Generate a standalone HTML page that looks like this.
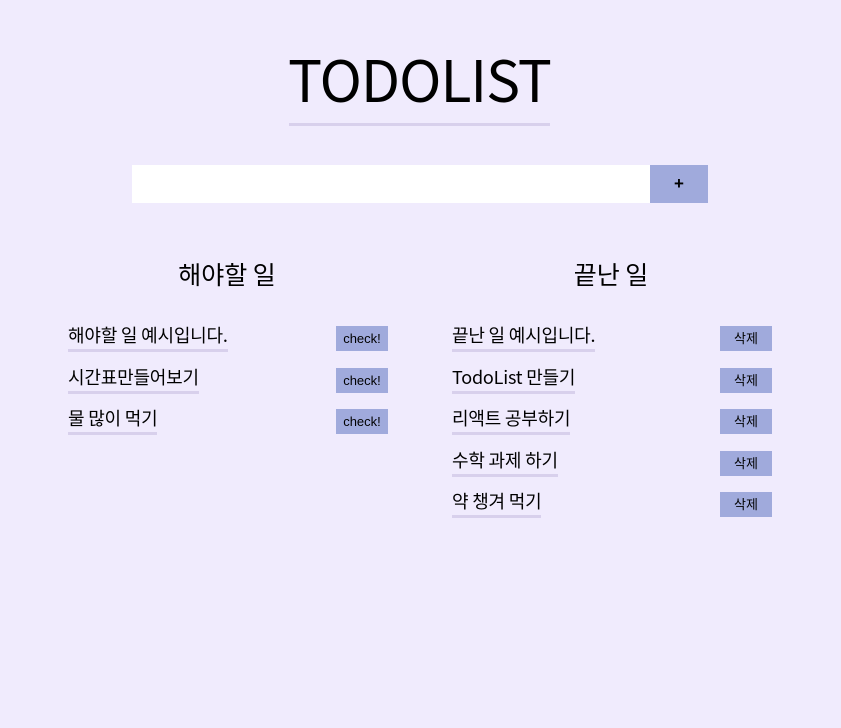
<!DOCTYPE html>
<html><head><meta charset="utf-8"><style>
html,body{margin:0;padding:0;width:841px;height:728px;background:#f0ebfd;overflow:hidden;font-family:"Liberation Sans","Noto Sans CJK KR",sans-serif;color:#000}
.a{position:absolute;white-space:nowrap}
.title{left:269px;top:43px;width:301px;font-size:57px;line-height:70px;text-align:center;font-family:"Noto Sans CJK KR","Liberation Sans",sans-serif;font-weight:400;letter-spacing:-1px}
.tl{left:289px;top:123px;width:261px;height:3px;background:#d8d0ec}
.inp{left:132px;top:165px;width:518px;height:38px;background:#fff}
.plus{left:650px;top:165px;width:58px;height:38px;background:#a0aadc;font-size:17px;line-height:38px;text-align:center;font-weight:bold}
.h{font-size:25px;line-height:30px;font-family:"Noto Sans CJK KR",sans-serif;top:259px;text-align:center;width:200px}
.it{font-size:18px;line-height:24px;font-family:"Noto Sans CJK KR",sans-serif;padding-bottom:2px;border-bottom:3px solid #d8d0ec;letter-spacing:-0.2px}
.b{width:52px;height:25px;background:#a0aadc;font-size:13px;line-height:25px;text-align:center}
</style></head><body>
<div class="a title">TODOLIST</div>
<div class="a tl"></div>
<div class="a inp"></div>
<div class="a plus">+</div>
<div class="a h" style="left:127px">해야할 일</div>
<div class="a h" style="left:511px">끝난 일</div>

<div class="a it" style="left:68px;top:323px">해야할 일 예시입니다.</div>
<div class="a it" style="left:68px;top:365px">시간표만들어보기</div>
<div class="a it" style="left:68px;top:406px">물 많이 먹기</div>
<div class="a b" style="left:336px;top:326px">check!</div>
<div class="a b" style="left:336px;top:368px">check!</div>
<div class="a b" style="left:336px;top:409px">check!</div>

<div class="a it" style="left:452px;top:323px">끝난 일 예시입니다.</div>
<div class="a it" style="left:452px;top:365px">TodoList 만들기</div>
<div class="a it" style="left:452px;top:406px">리액트 공부하기</div>
<div class="a it" style="left:452px;top:448px">수학 과제 하기</div>
<div class="a it" style="left:452px;top:489px">약 챙겨 먹기</div>
<div class="a b" style="left:720px;top:326px">삭제</div>
<div class="a b" style="left:720px;top:368px">삭제</div>
<div class="a b" style="left:720px;top:409px">삭제</div>
<div class="a b" style="left:720px;top:451px">삭제</div>
<div class="a b" style="left:720px;top:492px">삭제</div>
</body></html>
